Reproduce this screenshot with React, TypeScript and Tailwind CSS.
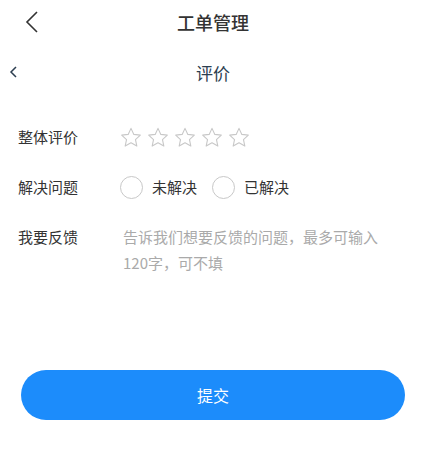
import React, { FC, useState } from "react";

const Star: FC<{ active: boolean }> = ({ active }) => (
  <svg width="22" height="21" viewBox="0 0 24 23" fill={active ? "#fbbf24" : "none"} stroke={active ? "#fbbf24" : "#c8c8c8"} strokeWidth="1.2" strokeLinejoin="round">
    <path d="M12 1.5l3.1 6.6 7.1.8-5.3 4.9 1.5 7.1L12 17.3l-6.4 3.6 1.5-7.1L1.8 8.9l7.1-.8z" />
  </svg>
);

const Radio: FC<{ checked: boolean; label: string; onClick: () => void }> = ({ checked, label, onClick }) => (
  <button onClick={onClick} className="flex items-center">
    <span className={`w-[23px] h-[23px] rounded-full border ${checked ? "border-[#1c8cfb] bg-[#1c8cfb]" : "border-[#c8c8c8]"}`} />
    <span className="ml-[9px] text-[15px] text-[#333]">{label}</span>
  </button>
);

const App: FC = () => {
  const [score, setScore] = useState(0);
  const [solved, setSolved] = useState("");
  const [feedback, setFeedback] = useState("");

  return (
    <div className="w-[426px] h-[464px] bg-white font-['Noto_Sans_CJK_SC',sans-serif] text-[#333]">
      <div className="relative h-[44px] flex items-center justify-center">
        <svg className="absolute left-[25px] top-[11px]" width="14" height="22" viewBox="0 0 14 22" fill="none" stroke="#333" strokeWidth="1.6">
          <path d="M12 1L2 11l10 10" />
        </svg>
        <span className="text-[18px] font-medium text-[#333]">工单管理</span>
      </div>
      <div className="relative h-[58px] flex items-center justify-center">
        <svg className="absolute left-[9px] top-[22px]" width="9" height="12" viewBox="0 0 9 12" fill="none" stroke="#2c3e50" strokeWidth="1.5">
          <path d="M7 1L2 6l5 5" />
        </svg>
        <span className="text-[17px] text-[#2c3e50]">评价</span>
      </div>

      <div className="pl-[18px] mt-[23px]">
        <div className="flex items-center h-[24px]">
          <span className="w-[102px] text-[15px]">整体评价</span>
          <div className="flex gap-[5px]">
            {[1, 2, 3, 4, 5].map((n) => (
              <button key={n} onClick={() => setScore(n)}>
                <Star active={n <= score} />
              </button>
            ))}
          </div>
        </div>

        <div className="flex items-center h-[24px] mt-[26px]">
          <span className="w-[102px] text-[15px]">解决问题</span>
          <Radio checked={solved === "no"} label="未解决" onClick={() => setSolved("no")} />
          <div className="w-[15px]" />
          <Radio checked={solved === "yes"} label="已解决" onClick={() => setSolved("yes")} />
        </div>

        <div className="flex mt-[25px]">
          <span className="w-[105px] text-[15px] leading-[26px]">我要反馈</span>
          <textarea
            value={feedback}
            onChange={(e) => setFeedback(e.target.value)}
            maxLength={120}
            placeholder="告诉我们想要反馈的问题，最多可输入120字，可不填"
            className="w-[266px] h-[100px] resize-none outline-none text-[15px] leading-[26px] placeholder-[#aaa]"
          />
        </div>
      </div>

      <div className="px-[21px] mt-[46px]">
        <button className="w-full h-[50px] rounded-full bg-[#1c8cfb] text-white text-[16px]">提交</button>
      </div>
    </div>
  );
};

export default App;
